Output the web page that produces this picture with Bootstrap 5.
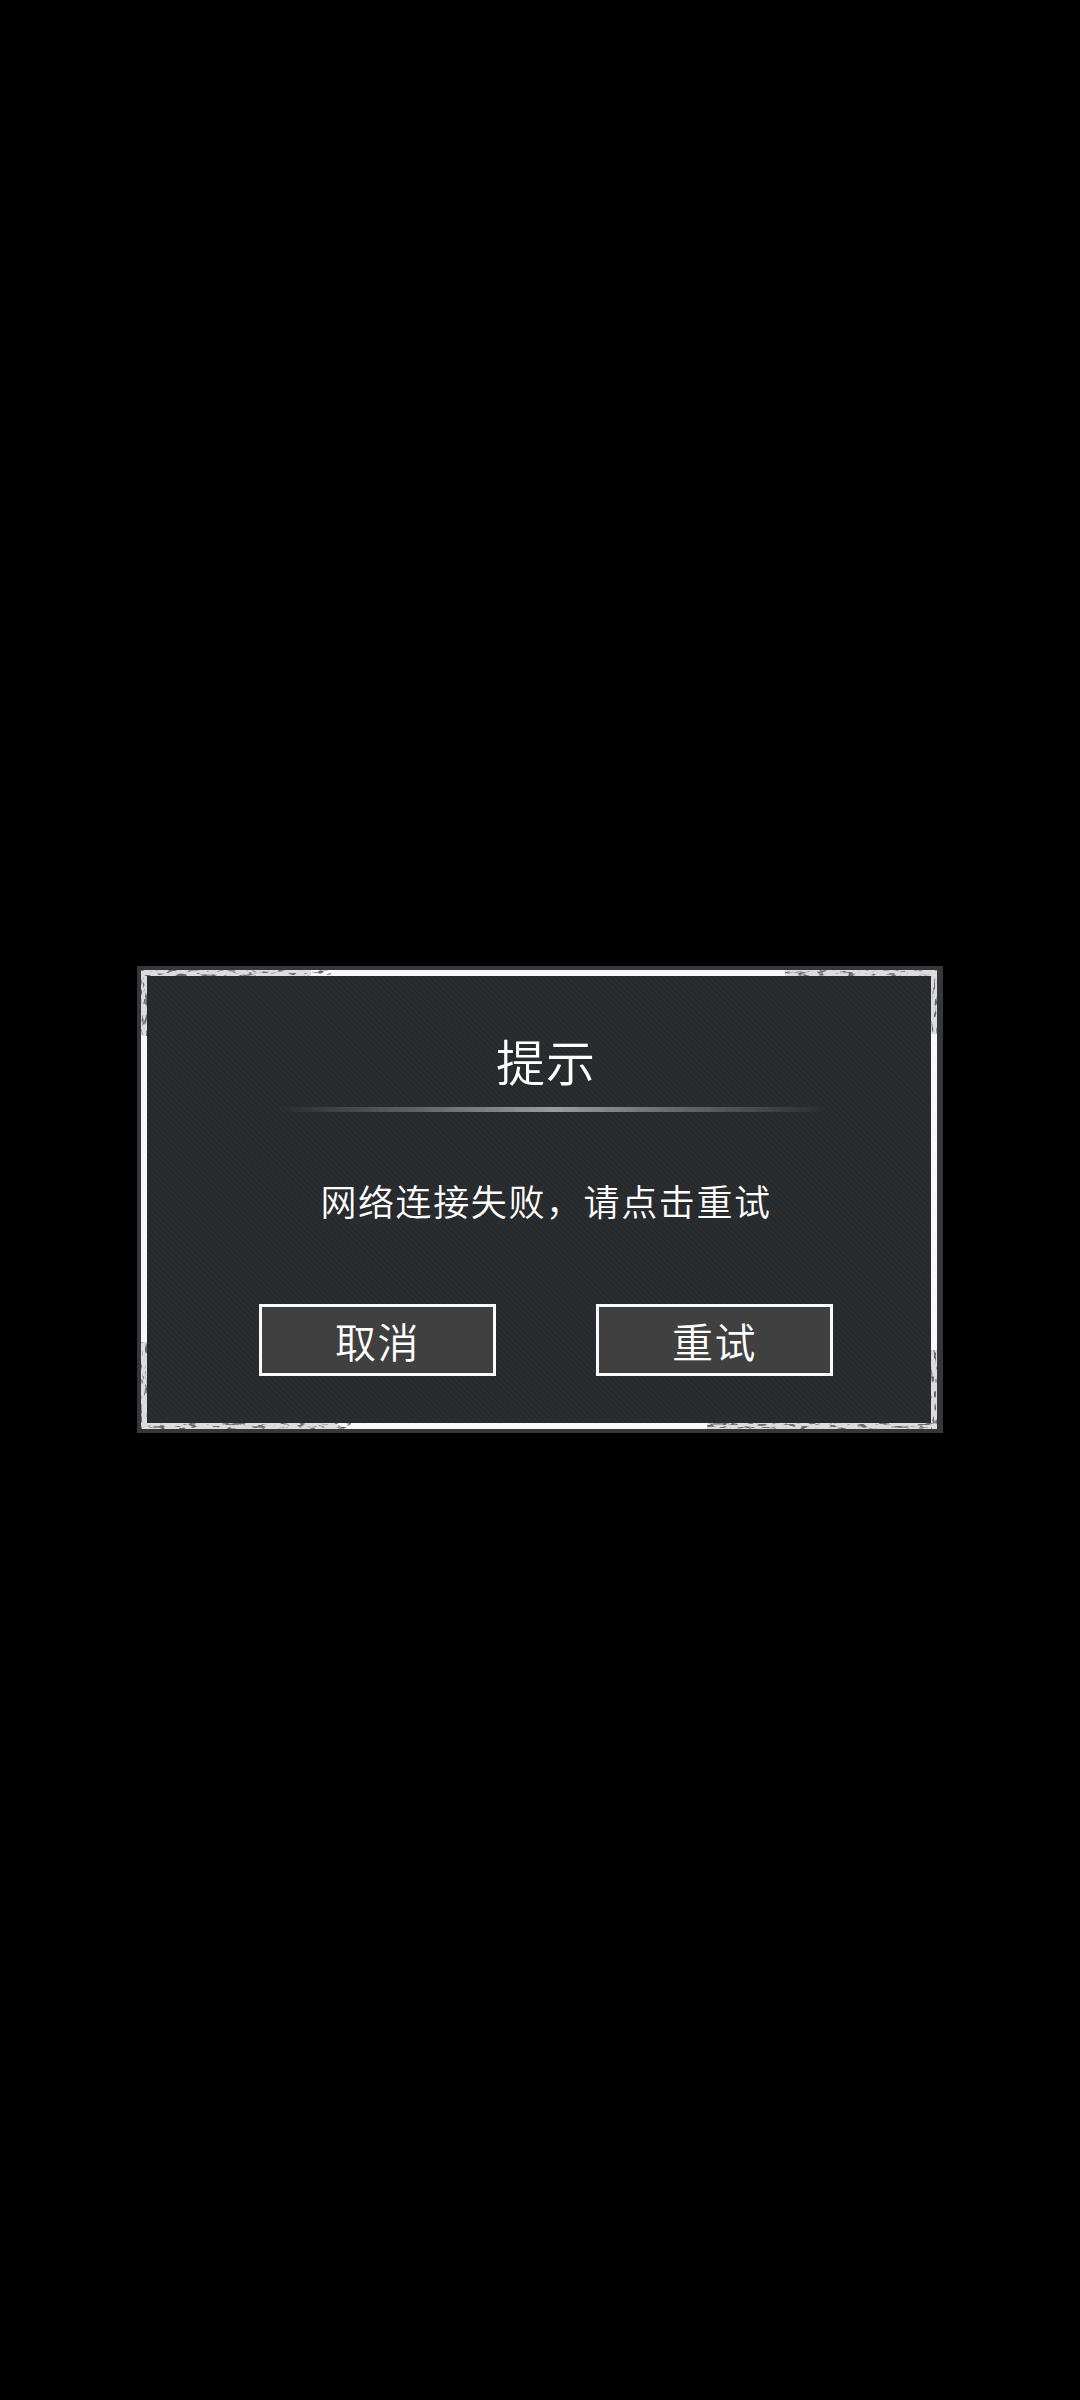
<!DOCTYPE html>
<html lang="zh-CN">
<head>
<meta charset="utf-8">
<title>提示</title>
<link href="https://cdn.jsdelivr.net/npm/bootstrap@5.3.0/dist/css/bootstrap.min.css" rel="stylesheet">
<style>
html, body { height: 100%; background: #000; }
body { font-family: "Noto Sans CJK SC", "Noto Sans", sans-serif; padding: 0 0 1px 0; }
.dlg-frame {
  width: 806px; height: 467px;
  border-style: solid; border-color: #36373a;
  border-width: 4px 6px 4px 4px;
}
.dlg-inner {
  height: 100%;
  border: 6px solid #f8f8f8;
  background-color: #282b2e;
  background-image: repeating-linear-gradient(45deg, rgba(255,255,255,.01) 0 2px, rgba(0,0,0,.02) 2px 4px);
  padding: 54px 98px 47px 112px;
  color: #fff;
}
.dlg-title { font-size: 49px; line-height: 60px; font-weight: 350; letter-spacing: 1px; margin: 0 0 17px; }
.dlg-rule {
  height: 5px; margin: 0 6px 63px 21px;
  background: linear-gradient(90deg, rgba(150,153,155,0) 0%, #55585a 20%, #999b9d 50%, #55585a 80%, rgba(150,153,155,0) 100%);
}
.dlg-msg { font-size: 36px; line-height: 50px; font-weight: 350; letter-spacing: 1.6px; margin: 0 0 79px; }
.dlg-btn {
  width: 237px; height: 72px; padding: 0;
  background: #404040; color: #fff;
  border: 3px solid #fafafa; border-radius: 0;
  font-size: 41px; line-height: 60px; font-weight: 350; letter-spacing: 1.5px;
}
.dlg-wear { inset: -4px -6px -4px -4px; width: 806px; height: 467px; pointer-events: none; }
</style>
</head>
<body class="d-flex align-items-center justify-content-center">
<div class="dlg-frame position-relative">
  <div class="dlg-inner">
    <h1 class="dlg-title text-center">提示</h1>
    <div class="dlg-rule"></div>
    <p class="dlg-msg text-center">网络连接失败，请点击重试</p>
    <div class="d-flex justify-content-between">
      <button type="button" class="btn dlg-btn">取消</button>
      <button type="button" class="btn dlg-btn">重试</button>
    </div>
  </div>
  <svg class="dlg-wear position-absolute" viewBox="0 0 806 467" aria-hidden="true">
    <defs>
      <filter id="wearA" x="0" y="0" width="100%" height="100%" color-interpolation-filters="sRGB">
        <feTurbulence type="fractalNoise" baseFrequency="0.1 0.35" numOctaves="3" seed="4"/>
        <feColorMatrix values="0 0 0 0 0  0 0 0 0 0  0 0 0 0 0  6 0 0 0 -3.3"/>
        <feComposite in="SourceGraphic" operator="in"/>
      </filter>
      <filter id="wearB" x="0" y="0" width="100%" height="100%" color-interpolation-filters="sRGB">
        <feTurbulence type="fractalNoise" baseFrequency="0.35 0.1" numOctaves="3" seed="9"/>
        <feColorMatrix values="0 0 0 0 0  0 0 0 0 0  0 0 0 0 0  6 0 0 0 -3.3"/>
        <feComposite in="SourceGraphic" operator="in"/>
      </filter>
    </defs>
    <g fill="#d8d8d8" opacity=".85">
      <rect x="4" y="4" width="170" height="6"/>
      <rect x="648" y="4" width="152" height="6"/>
      <rect x="10" y="457" width="190" height="6"/>
      <rect x="570" y="457" width="230" height="6"/>
      <rect x="4" y="10" width="6" height="60"/>
      <rect x="794" y="10" width="6" height="58"/>
      <rect x="4" y="376" width="6" height="87"/>
      <rect x="794" y="384" width="6" height="79"/>
    </g>
    <g fill="#66686a">
      <g filter="url(#wearA)">
        <rect x="4" y="4" width="190" height="6"/>
        <rect x="648" y="4" width="152" height="6"/>
        <rect x="10" y="457" width="204" height="6"/>
        <rect x="570" y="457" width="230" height="6"/>
      </g>
      <g filter="url(#wearB)">
        <rect x="4" y="10" width="6" height="60"/>
        <rect x="794" y="10" width="6" height="58"/>
        <rect x="4" y="376" width="6" height="87"/>
        <rect x="794" y="384" width="6" height="79"/>
      </g>
    </g>
  </svg>
</div>
<script src="https://cdn.jsdelivr.net/npm/bootstrap@5.3.0/dist/js/bootstrap.bundle.min.js"></script>
</body>
</html>
